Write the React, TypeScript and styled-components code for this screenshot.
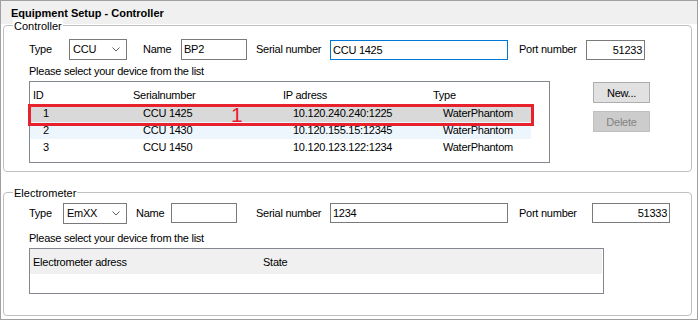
import React from "react";
import styled, { createGlobalStyle } from "styled-components";

const GlobalStyle = createGlobalStyle`
  html, body {
    margin: 0;
    padding: 0;
    background: #fff;
  }
  body {
    font-family: "Liberation Sans", Arial, sans-serif;
    font-size: 11px;
    color: #000;
  }
`;

type Device = { id: number; serial: string; ip: string; type: string };

const devices: Device[] = [
  { id: 1, serial: "CCU 1425", ip: "10.120.240.240:1225", type: "WaterPhantom" },
  { id: 2, serial: "CCU 1430", ip: "10.120.155.15:12345", type: "WaterPhantom" },
  { id: 3, serial: "CCU 1450", ip: "10.120.123.122:1234", type: "WaterPhantom" },
];

function Chevron() {
  return (
    <svg width="8" height="5" viewBox="0 0 8 5">
      <polyline
        points="0.5,0.5 4,4 7.5,0.5"
        fill="none"
        stroke="#606060"
        strokeWidth="1"
      />
    </svg>
  );
}

export default function App() {
  return (
    <>
      <GlobalStyle />
      <Window className="EquipmentSetup-root">
        <TitleBar>Equipment Setup - Controller</TitleBar>
        <Body>
          <GroupBox $gapTop={1} $padBottom={8}>
            <Legend>Controller</Legend>
            <FieldRow $top={13} $align="flex-end">
              <Label $w={40}>Type</Label>
              <Combo $w={58}>
                <span>CCU</span>
                <Chevron />
              </Combo>
              <Label $ml={16} $w={38}>
                Name
              </Label>
              <TextBox $w={66} $h={21}>
                BP2
              </TextBox>
              <Label $ml={9} $w={74}>
                Serial number
              </Label>
              <TextBox $w={178} $focused>
                CCU 1425
              </TextBox>
              <Label $ml={11} $w={67}>
                Port number
              </Label>
              <TextBox $w={59} $right>
                51233
              </TextBox>
            </FieldRow>
            <Hint $top={4}>Please select your device from the list</Hint>
            <ListRow>
              <ListView $w={521} $h={82}>
                <DeviceHeader>
                  <span>ID</span>
                  <span>Serialnumber</span>
                  <span>IP adress</span>
                  <span>Type</span>
                </DeviceHeader>
                {devices.map((d) => (
                  <DeviceRow
                    key={d.id}
                    $state={d.id === 1 ? "selected" : d.id === 2 ? "hover" : "none"}
                  >
                    <span>{d.id}</span>
                    <span>{d.serial}</span>
                    <span>{d.ip}</span>
                    <span>{d.type}</span>
                  </DeviceRow>
                ))}
                <Marker>
                  <MarkerNumber>1</MarkerNumber>
                </Marker>
              </ListView>
              <ButtonColumn>
                <Button>New...</Button>
                <Button $disabled>Delete</Button>
              </ButtonColumn>
            </ListRow>
          </GroupBox>

          <GroupBox $gapTop={20} $padBottom={21}>
            <Legend>Electrometer</Legend>
            <FieldRow $top={10} $align="flex-start">
              <Label $w={34}>Type</Label>
              <Combo $w={64}>
                <span>EmXX</span>
                <Chevron />
              </Combo>
              <Label $ml={9} $w={35}>
                Name
              </Label>
              <TextBox $w={66} />
              <Label $ml={19} $w={74}>
                Serial number
              </Label>
              <TextBox $w={178}>1234</TextBox>
              <Label $ml={11} $w={73}>
                Port number
              </Label>
              <TextBox $w={78} $right>
                51333
              </TextBox>
            </FieldRow>
            <Hint $top={7}>Please select your device from the list</Hint>
            <ListRow>
              <ListView $w={575} $h={46}>
                <MeterHeader>
                  <span>Electrometer adress</span>
                  <span>State</span>
                </MeterHeader>
              </ListView>
            </ListRow>
          </GroupBox>
        </Body>
      </Window>
    </>
  );
}

const Window = styled.div`
  width: 698px;
  height: 320px;
  box-sizing: border-box;
  border: 1px solid #a0a0a0;
  display: flex;
  flex-direction: column;
  background: #fff;
  letter-spacing: -0.25px;
`;

const TitleBar = styled.div`
  flex: none;
  height: 23px;
  box-sizing: border-box;
  padding: 2px 0 0 10px;
  background: #f0f0f0;
  font-weight: bold;
  line-height: 21px;
  letter-spacing: 0;
  white-space: nowrap;
`;

const Body = styled.div`
  display: flex;
  flex-direction: column;
  padding: 0 5px 3px 2px;
`;

const GroupBox = styled.section<{ $gapTop: number; $padBottom: number }>`
  position: relative;
  margin-top: ${(p) => p.$gapTop}px;
  padding-bottom: ${(p) => p.$padBottom}px;
  border: 1px solid #c0c0c0;
  border-radius: 4px;
`;

const Legend = styled.div`
  position: absolute;
  left: 9px;
  top: -7px;
  padding: 0 1px;
  line-height: 14px;
  background: #fff;
  letter-spacing: 0;
  white-space: nowrap;
`;

const FieldRow = styled.div<{ $top: number; $align: string }>`
  display: flex;
  align-items: ${(p) => p.$align};
  height: 21px;
  margin-top: ${(p) => p.$top}px;
  padding-left: 25px;
`;

const Label = styled.span<{ $w: number; $ml?: number }>`
  flex: none;
  width: ${(p) => p.$w}px;
  margin-left: ${(p) => p.$ml ?? 0}px;
  height: 21px;
  line-height: 21px;
  white-space: nowrap;
`;

const Combo = styled.div<{ $w: number }>`
  flex: none;
  display: flex;
  align-items: center;
  justify-content: space-between;
  box-sizing: border-box;
  width: ${(p) => p.$w}px;
  height: 21px;
  padding: 0 6px 0 3px;
  border: 1px solid #7a7a7a;
  background: #fff;
  line-height: 19px;
`;

const TextBox = styled.div<{ $w: number; $h?: number; $focused?: boolean; $right?: boolean }>`
  flex: none;
  box-sizing: border-box;
  width: ${(p) => p.$w}px;
  height: ${(p) => p.$h ?? 20}px;
  line-height: ${(p) => (p.$h ?? 20) - 2}px;
  padding: 0 2px;
  border: 1px solid ${(p) => (p.$focused ? "#0078d7" : "#7a7a7a")};
  background: #fff;
  text-align: ${(p) => (p.$right ? "right" : "left")};
  white-space: nowrap;
  overflow: hidden;
`;

const Hint = styled.div<{ $top: number }>`
  margin-top: ${(p) => p.$top}px;
  padding-left: 25px;
  line-height: 14px;
  white-space: nowrap;
`;

const ListRow = styled.div`
  display: flex;
  align-items: flex-start;
  margin-top: 3px;
  padding-left: 25px;
`;

const ListView = styled.div<{ $w: number; $h: number }>`
  position: relative;
  flex: none;
  box-sizing: border-box;
  width: ${(p) => p.$w}px;
  height: ${(p) => p.$h}px;
  border: 1px solid #828790;
  background: #fff;
`;

const DeviceHeader = styled.div`
  display: grid;
  grid-template-columns: 100px 150px 150px 101px;
  box-sizing: border-box;
  height: 23px;
  padding-top: 4px;
  line-height: 18px;
  span {
    padding-left: 3px;
    white-space: nowrap;
  }
`;

const DeviceRow = styled.div<{ $state: "selected" | "hover" | "none" }>`
  display: grid;
  grid-template-columns: 100px 150px 150px 101px;
  width: 501px;
  height: 17px;
  line-height: 17px;
  background: ${(p) =>
    p.$state === "selected" ? "#d9d9d9" : p.$state === "hover" ? "#eef6fd" : "transparent"};
  span {
    padding-left: 13px;
    white-space: nowrap;
  }
`;

const MeterHeader = styled.div`
  display: grid;
  grid-template-columns: 230px 1fr;
  box-sizing: border-box;
  height: 25px;
  padding-top: 1px;
  line-height: 25px;
  margin-right: 1px;
  background: #f0f0f0;
  span {
    padding-left: 3px;
    white-space: nowrap;
  }
`;

const Marker = styled.div`
  position: absolute;
  left: -2px;
  top: 22px;
  width: 506px;
  height: 22px;
  box-sizing: border-box;
  border: 3px solid #e8222c;
  pointer-events: none;
`;

const MarkerNumber = styled.span`
  position: absolute;
  left: 200px;
  top: -3px;
  font-size: 21px;
  line-height: 21px;
  letter-spacing: 0;
  color: #e8222c;
`;

const ButtonColumn = styled.div`
  display: flex;
  flex-direction: column;
  gap: 8px;
  margin: 1px 0 0 43px;
`;

const Button = styled.div<{ $disabled?: boolean }>`
  box-sizing: border-box;
  width: 57px;
  height: 21px;
  border: 1px solid ${(p) => (p.$disabled ? "#bfbfbf" : "#adadad")};
  background: ${(p) => (p.$disabled ? "#cccccc" : "#e1e1e1")};
  color: ${(p) => (p.$disabled ? "#838383" : "#000")};
  text-align: center;
  line-height: 20px;
  white-space: nowrap;
`;
